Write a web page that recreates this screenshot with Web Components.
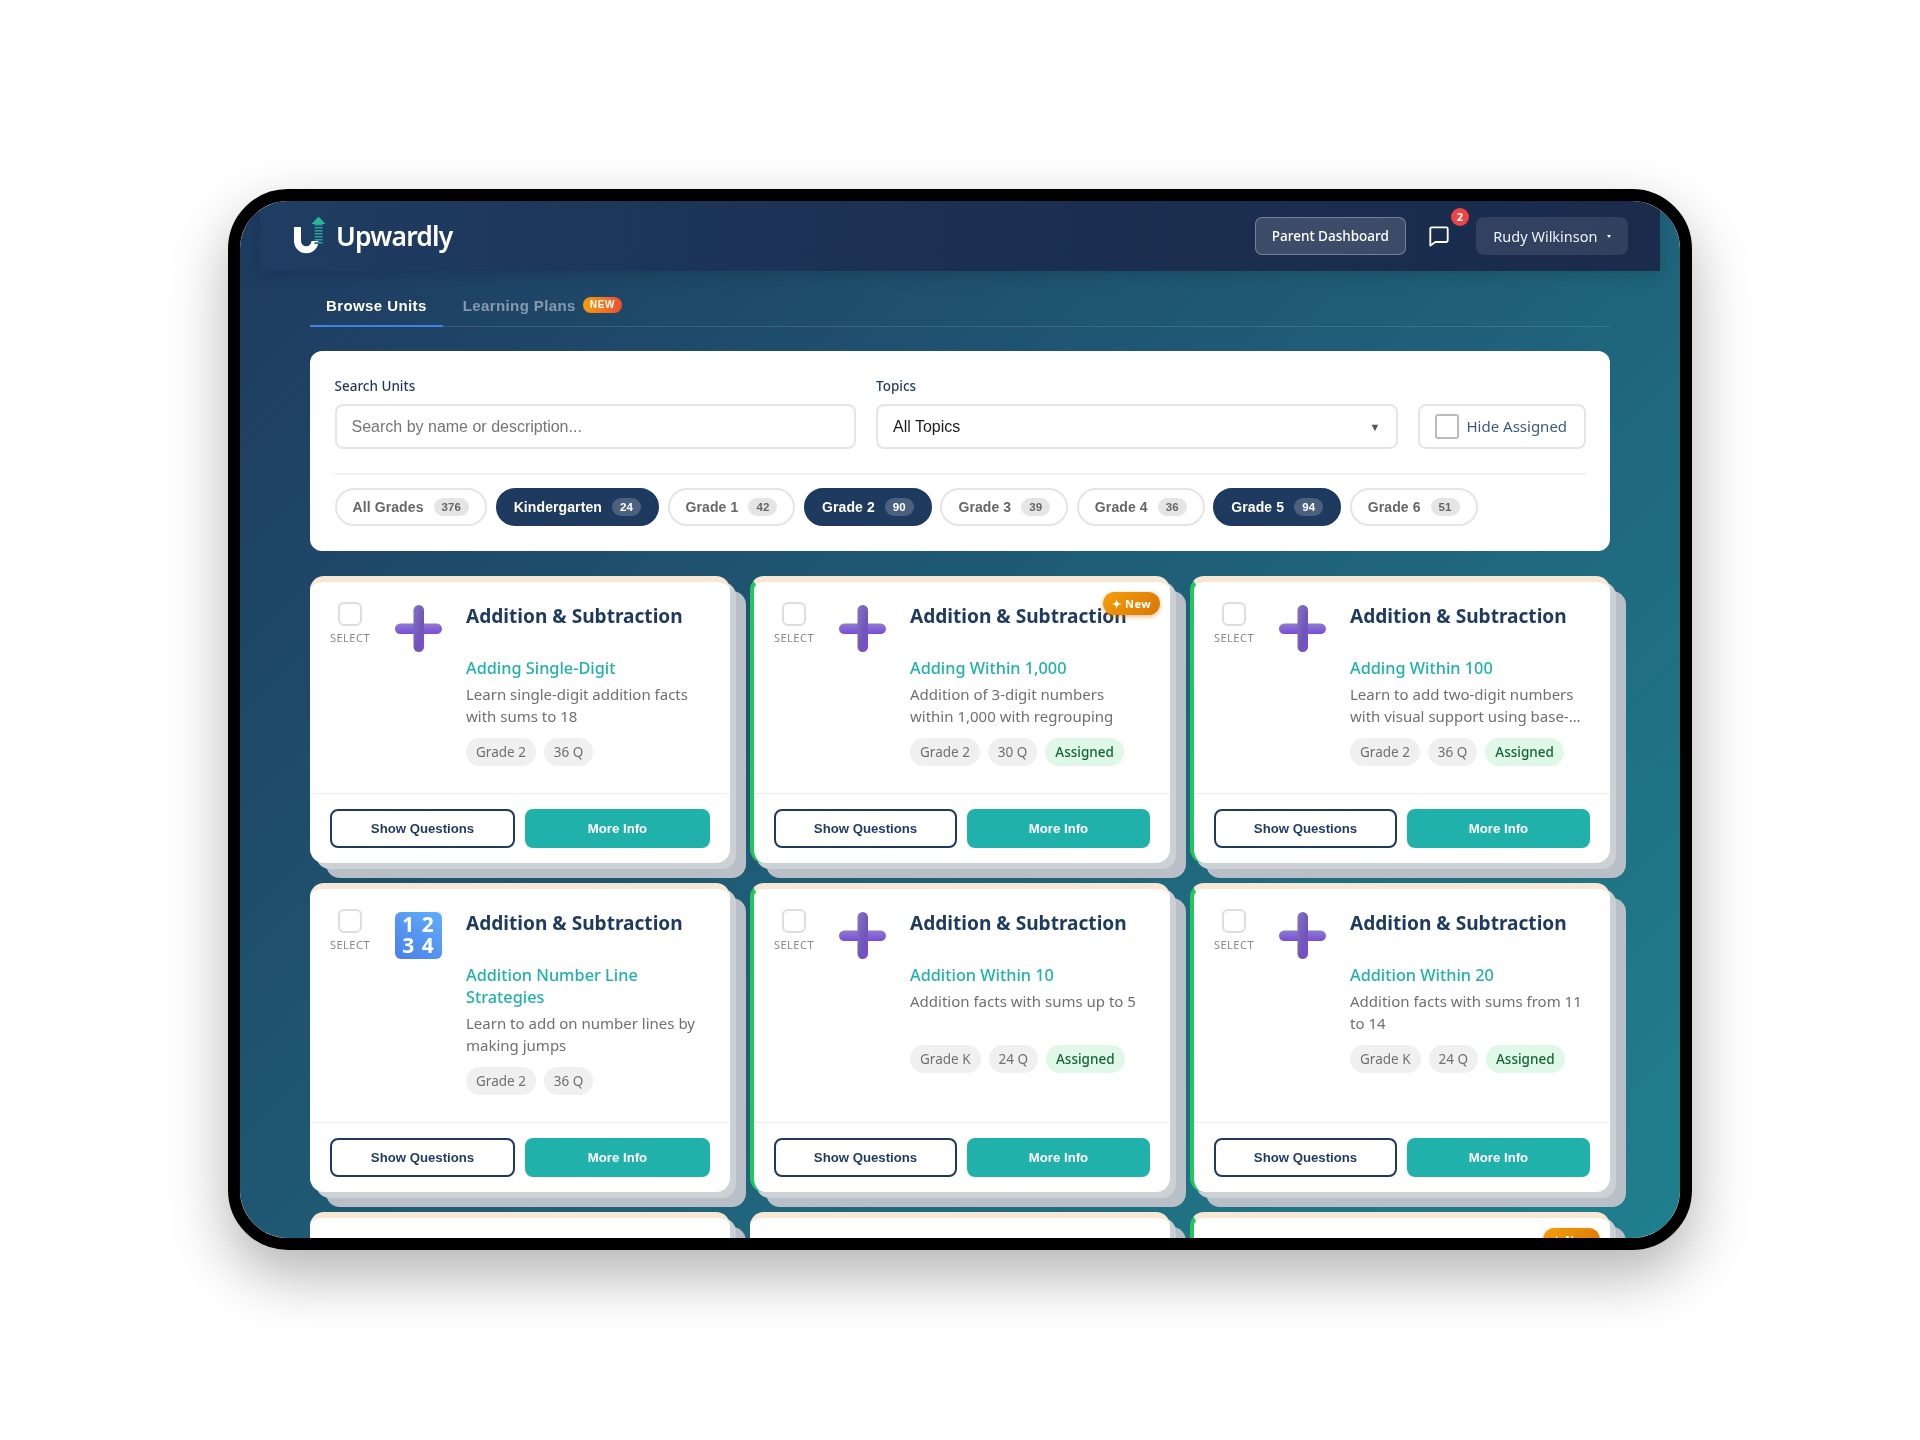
<!DOCTYPE html>
<html lang="en">
<head>
<meta charset="utf-8">
<title>Upwardly</title>
<style>
  html, body { margin: 0; padding: 0; background: #fff; }
  body { box-sizing: border-box; min-height: 1440px; padding-bottom: 2px; display: flex; align-items: center; justify-content: center; font-family: "Noto Sans", sans-serif; }
</style>
</head>
<body>
<app-device>
  <app-navbar></app-navbar>
  <app-tabs></app-tabs>
  <filter-panel>
    <grade-pill count="376">All Grades</grade-pill>
    <grade-pill count="24" active>Kindergarten</grade-pill>
    <grade-pill count="42">Grade 1</grade-pill>
    <grade-pill count="90" active>Grade 2</grade-pill>
    <grade-pill count="39">Grade 3</grade-pill>
    <grade-pill count="36">Grade 4</grade-pill>
    <grade-pill count="94" active>Grade 5</grade-pill>
    <grade-pill count="51">Grade 6</grade-pill>
  </filter-panel>
  <unit-grid>
    <unit-card grade="Grade 2" questions="36 Q">
      <span slot="name">Adding Single-Digit</span>
      Learn single-digit addition facts with sums to 18
    </unit-card>
    <unit-card grade="Grade 2" questions="30 Q" assigned fresh>
      <span slot="name">Adding Within 1,000</span>
      Addition of 3-digit numbers within 1,000 with regrouping
    </unit-card>
    <unit-card grade="Grade 2" questions="36 Q" assigned clamp>
      <span slot="name">Adding Within 100</span>
      Learn to add two-digit numbers with visual support using base-ten blocks
    </unit-card>
    <unit-card grade="Grade 2" questions="36 Q" icon="numbers">
      <span slot="name">Addition Number Line Strategies</span>
      Learn to add on number lines by making jumps
    </unit-card>
    <unit-card grade="Grade K" questions="24 Q" assigned>
      <span slot="name">Addition Within 10</span>
      Addition facts with sums up to 5
    </unit-card>
    <unit-card grade="Grade K" questions="24 Q" assigned>
      <span slot="name">Addition Within 20</span>
      Addition facts with sums from 11 to 14
    </unit-card>
    <unit-stub></unit-stub>
    <unit-stub></unit-stub>
    <unit-stub assigned fresh></unit-stub>
  </unit-grid>
</app-device>

<script>
const templateDevice = document.createElement('template');
templateDevice.innerHTML = `
  <style>
    :host {
      display: block;
      width: 1440px;
      height: 1037px;
      border: 12px solid #000;
      border-radius: 60px;
      box-shadow: 0 25px 60px rgba(0,0,0,.3);
      overflow: hidden;
      flex: none;
    }
    .screen {
      height: 100%;
      display: flex;
      flex-direction: column;
      background: linear-gradient(135deg, #1e3a5f 0%, #20808d 100%);
      overflow: hidden;
      filter: blur(.3px);
    }
  </style>
  <div class="screen"><slot></slot></div>
`;
class AppDevice extends HTMLElement {
  constructor() {
    super();
    this.attachShadow({mode: 'open'});
    this.shadowRoot.appendChild(templateDevice.content.cloneNode(true));
  }
}
customElements.define('app-device', AppDevice);

const templateNavbar = document.createElement('template');
templateNavbar.innerHTML = `
  <style>
    :host {
      display: flex;
      flex: none;
      align-items: center;
      height: 70px;
      margin: 0 20px;
      padding: 0 32px 0 30px;
      box-sizing: border-box;
      background: linear-gradient(90deg, #1f3d62 0%, #1b2f52 50%, #1a2b4c 100%);
      box-shadow: 0 4px 16px rgba(0,0,0,.14);
      color: #fff;
      font-family: "Noto Sans", sans-serif;
    }
    .brand { display: flex; align-items: center; gap: 10px; flex: 1; }
    .brand svg { margin-top: -2px; }
    .brand span { font-size: 26.5px; font-weight: 600; letter-spacing: -.8px; line-height: 1; margin-top: 2px; }
    .dash {
      height: 38px;
      box-sizing: border-box;
      display: flex;
      align-items: center;
      padding: 0 16px;
      background: rgba(255,255,255,.15);
      border: 1px solid rgba(255,255,255,.3);
      border-radius: 7px;
      font-size: 13.5px;
      font-weight: 500;
    }
    .chat { position: relative; width: 22px; height: 22px; margin: 0 26px 0 22px; }
    .chat svg { display: block; }
    .badge {
      position: absolute;
      left: 23px;
      top: -17px;
      width: 18px;
      height: 18px;
      border-radius: 50%;
      background: #ef4444;
      font-size: 11px;
      font-weight: 700;
      line-height: 18px;
      text-align: center;
    }
    .user {
      height: 38px;
      display: flex;
      align-items: center;
      gap: 9px;
      padding: 0 17.5px;
      background: rgba(255,255,255,.1);
      border-radius: 8px;
      font-size: 14.5px;
      color: #eef1f5;
    }
    .user i { width: 0; height: 0; border: 2.5px solid transparent; border-top: 3px solid #fff; margin-top: 3px; }
  </style>
  <div class="brand">
    <svg width="36" height="38" viewBox="0 0 36 38" fill="none">
      <defs>
        <linearGradient id="stem" x1="0" y1="0" x2="0" y2="1">
          <stop offset="0" stop-color="#2fb5a0"/>
          <stop offset="1" stop-color="#1f5f78"/>
        </linearGradient>
      </defs>
      <path d="M7.5 11v14a8.5 8.5 0 0 0 17.5 0" stroke="#fff" stroke-width="7" stroke-linecap="butt"/>
      <path d="M21.5 8 L28.5 0.5 L35.5 8 Z" fill="#2bb39f"/>
      <g fill="url(#stem)">
        <rect x="24.5" y="8" width="8" height="2"/>
        <rect x="24.5" y="11" width="8" height="2"/>
        <rect x="24.5" y="14" width="8" height="2"/>
        <rect x="24.5" y="17" width="8" height="2"/>
        <rect x="24.5" y="20" width="8" height="2"/>
        <rect x="24.5" y="23" width="8" height="2"/>
        <rect x="24.5" y="26" width="8" height="2"/>
      </g>
    </svg>
    <span>Upwardly</span>
  </div>
  <div class="dash">Parent Dashboard</div>
  <div class="chat">
    <svg width="22" height="22" viewBox="0 0 24 24" fill="none" stroke="#fff" stroke-width="2" stroke-linejoin="round">
      <path d="M4 2.5h16a1.5 1.5 0 0 1 1.5 1.5v13a1.5 1.5 0 0 1-1.5 1.5H8L2.5 22.5V4A1.5 1.5 0 0 1 4 2.5z"/>
    </svg>
    <div class="badge">2</div>
  </div>
  <div class="user">Rudy Wilkinson <i></i></div>
`;
class AppNavbar extends HTMLElement {
  constructor() {
    super();
    this.attachShadow({mode: 'open'});
    this.shadowRoot.appendChild(templateNavbar.content.cloneNode(true));
  }
}
customElements.define('app-navbar', AppNavbar);

const templateTabs = document.createElement('template');
templateTabs.innerHTML = `
  <style>
    :host {
      display: flex;
      flex: none;
      align-items: flex-end;
      gap: 4px;
      height: 56px;
      margin: 0 70px 24px;
      box-sizing: border-box;
      border-bottom: 1px solid rgba(255,255,255,.12);
      font-family: "Liberation Sans", Arial, sans-serif;
      font-size: 15px;
      font-weight: 700;
      letter-spacing: .4px;
    }
    .tab {
      display: flex;
      align-items: center;
      gap: 7px;
      height: 42px;
      padding: 1px 16px 0;
      margin-bottom: -1px;
      box-sizing: border-box;
      color: rgba(255,255,255,.45);
      border-bottom: 2px solid transparent;
    }
    .active { color: #fff; border-bottom-color: #3f83e8; }
    .new {
      padding: 0 7px;
      height: 16px;
      line-height: 16px;
      border-radius: 8px;
      background: linear-gradient(90deg, #f59e0b, #ef4f2f);
      color: #fff;
      font-size: 10px;
      letter-spacing: .7px;
    }
  </style>
  <div class="tab active">Browse Units</div>
  <div class="tab">Learning Plans <span class="new">NEW</span></div>
`;
class AppTabs extends HTMLElement {
  constructor() {
    super();
    this.attachShadow({mode: 'open'});
    this.shadowRoot.appendChild(templateTabs.content.cloneNode(true));
  }
}
customElements.define('app-tabs', AppTabs);

const templatePanel = document.createElement('template');
templatePanel.innerHTML = `
  <style>
    :host {
      display: block;
      flex: none;
      margin: 0 70px 25px;
      padding: 25px 24.5px 24px;
      height: 200px;
      box-sizing: border-box;
      background: #fff;
      border-radius: 12px;
      font-family: "Noto Sans", sans-serif;
    }
    .row {
      display: grid;
      grid-template-columns: 521.5px 521.5px 168px;
      gap: 20px;
      align-items: end;
      padding-bottom: 24px;
      border-bottom: 2px solid #f0f0f0;
    }
    label { display: block; font-size: 13.5px; font-weight: 500; color: #1e3a5f; line-height: 20px; margin-bottom: 8px; }
    .box {
      height: 45px;
      box-sizing: border-box;
      display: flex;
      align-items: center;
      padding: 1px 15px 0;
      border: 2px solid #e5e5e5;
      border-radius: 8px;
      font-family: "Liberation Sans", Arial, sans-serif;
      font-size: 16px;
      color: #1c1c1c;
    }
    .hint { color: #757575; }
    .arrow { margin-left: auto; font-size: 11px; color: #555; }
    .hide {
      padding: 0 15px;
      gap: 8px;
      font-family: "Noto Sans", sans-serif;
      font-size: 15px;
      color: #3a5a85;
      white-space: nowrap;
    }
    .hide i { width: 24px; height: 25px; box-sizing: border-box; border: 2px solid #bbb; border-radius: 3px; flex: none; }
    .pills { display: flex; gap: 8.6px; margin-top: 13px; }
  </style>
  <div class="row">
    <div>
      <label>Search Units</label>
      <div class="box hint">Search by name or description...</div>
    </div>
    <div>
      <label>Topics</label>
      <div class="box">All Topics<span class="arrow">▼</span></div>
    </div>
    <div class="box hide"><i></i>Hide Assigned</div>
  </div>
  <div class="pills"><slot></slot></div>
`;
class FilterPanel extends HTMLElement {
  constructor() {
    super();
    this.attachShadow({mode: 'open'});
    this.shadowRoot.appendChild(templatePanel.content.cloneNode(true));
  }
}
customElements.define('filter-panel', FilterPanel);

const templatePill = document.createElement('template');
templatePill.innerHTML = `
  <style>
    :host {
      display: inline-flex;
      align-items: center;
      gap: 10px;
      height: 38px;
      padding: 0 16px;
      box-sizing: border-box;
      border: 2px solid #e5e5e5;
      border-radius: 19px;
      background: #fff;
      color: #666;
      font-family: "Liberation Sans", Arial, sans-serif;
      font-size: 14px;
      font-weight: 700;
      letter-spacing: .1px;
    }
    :host([active]) { background: #1e3a5f; border-color: #1e3a5f; color: #fff; }
    .count {
      height: 18px;
      line-height: 18px;
      padding: 0 8px;
      border-radius: 9px;
      background: #e5e5e5;
      font-size: 11.5px;
    }
    :host([active]) .count { background: rgba(255,255,255,.2); }
  </style>
  <slot></slot><span class="count"></span>
`;
class GradePill extends HTMLElement {
  constructor() {
    super();
    this.attachShadow({mode: 'open'});
    this.shadowRoot.appendChild(templatePill.content.cloneNode(true));
    this.shadowRoot.querySelector('.count').textContent = this.getAttribute('count');
  }
}
customElements.define('grade-pill', GradePill);

const templateGrid = document.createElement('template');
templateGrid.innerHTML = `
  <style>
    :host {
      display: grid;
      grid-template-columns: repeat(3, 420px);
      column-gap: 20px;
      row-gap: 20px;
      margin: 0 70px;
    }
  </style>
  <slot></slot>
`;
class UnitGrid extends HTMLElement {
  constructor() {
    super();
    this.attachShadow({mode: 'open'});
    this.shadowRoot.appendChild(templateGrid.content.cloneNode(true));
  }
}
customElements.define('unit-grid', UnitGrid);

const cardShell = `
    :host {
      display: flex;
      flex-direction: column;
      position: relative;
      box-sizing: border-box;
      background: #fff;
      border-top: 6px solid #f7e8d6;
      border-radius: 14px;
      box-shadow: 6px 6px 0 #ccd1d6, 16px 15px 0 #b9bfc6;
      font-family: "Noto Sans", sans-serif;
    }
    :host([assigned]) { border-left: 4px solid #22c55e; }
    .fresh {
      display: none;
      position: absolute;
      z-index: 2;
      top: 10px;
      right: 10px;
      height: 23px;
      line-height: 23px;
      padding: 0 9px;
      border-radius: 12px;
      background: linear-gradient(135deg, #f59e0b, #d97706);
      box-shadow: 0 2px 5px rgba(217,119,6,.45);
      color: #fff;
      font-size: 11px;
      font-weight: 700;
      letter-spacing: .4px;
      white-space: nowrap;
    }
    :host([fresh]) .fresh { display: block; }
    .check { width: 24px; height: 24px; box-sizing: border-box; border: 2px solid #ddd; border-radius: 6px; }
`;

const templateCard = document.createElement('template');
templateCard.innerHTML = `
  <style>
    ${cardShell}
    .body {
      display: grid;
      grid-template-columns: 40px 47px 1fr;
      column-gap: 24.5px;
      padding: 20px 20px 27px;
    }
    .pick { display: flex; flex-direction: column; align-items: center; gap: 5px; }
    .pick span { font-size: 11px; letter-spacing: .5px; color: #888; line-height: 14px; }
    .icon { width: 47px; height: 47px; margin-top: 3px; }
    .icon svg { display: block; }
    .numbers {
      box-sizing: border-box;
      display: grid;
      grid-template-columns: 1fr 1fr;
      padding: 2px 4px;
      border-radius: 6px;
      background: linear-gradient(215deg, #60aefa, #4b7fe8);
      color: #fff;
      font-size: 21px;
      font-weight: 700;
      line-height: 21px;
      text-align: center;
    }
    h3 { margin: 0; font-size: 19.1px; font-weight: 700; color: #1e3a5f; line-height: 28px; min-height: 55px; }
    .name { font-size: 16.3px; font-weight: 500; color: #20b2aa; line-height: 22px; }
    .desc { font-size: 15px; color: #707070; line-height: 22.5px; min-height: 45px; margin-top: 4px; }
    :host([clamp]) .desc { display: -webkit-box; -webkit-line-clamp: 2; -webkit-box-orient: vertical; overflow: hidden; }
    .tags { display: flex; gap: 8px; margin-top: 10px; }
    .tags span {
      height: 28px;
      line-height: 28px;
      padding: 0 10px;
      border-radius: 14px;
      background: #f0f0f0;
      color: #707070;
      font-size: 13.5px;
    }
    .tags .done { background: #e0f8e8; color: #166534; font-weight: 500; }
    .foot {
      display: flex;
      gap: 10px;
      margin-top: auto;
      padding: 15px 20px;
      border-top: 1px solid #eee;
    }
    .foot button {
      flex: 1;
      height: 39px;
      border: 2px solid #1e3a5f;
      border-radius: 8px;
      background: #fff;
      color: #1e3a5f;
      font-family: "Liberation Sans", Arial, sans-serif;
      font-size: 13.2px;
      font-weight: 700;
    }
    .foot .more { background: #20b2aa; border-color: #20b2aa; color: #fff; }
  </style>
  <div class="fresh">✦ New</div>
  <div class="body">
    <div class="pick"><div class="check"></div><span>SELECT</span></div>
    <div class="icon"></div>
    <div>
      <h3>Addition &amp; Subtraction</h3>
      <div class="name"><slot name="name"></slot></div>
      <div class="desc"><slot></slot></div>
      <div class="tags"></div>
    </div>
  </div>
  <div class="foot">
    <button>Show Questions</button>
    <button class="more">More Info</button>
  </div>
`;
const plusIcon = `
  <svg width="47" height="47" viewBox="0 0 47 47">
    <defs>
      <linearGradient id="bar" x1="0" y1="0" x2="0" y2="1">
        <stop offset="0" stop-color="#8d7cca"/>
        <stop offset="1" stop-color="#7c4bdc"/>
      </linearGradient>
      <linearGradient id="post" x1="0" y1="0" x2="1" y2="1">
        <stop offset="0" stop-color="#8474c6"/>
        <stop offset=".6" stop-color="#6f56b6"/>
        <stop offset="1" stop-color="#8148de"/>
      </linearGradient>
    </defs>
    <rect x="0" y="18.5" width="47" height="10.5" rx="5.25" fill="url(#bar)"/>
    <rect x="18.5" y="0" width="10.5" height="47" rx="5.25" fill="url(#post)"/>
  </svg>`;

class UnitCard extends HTMLElement {
  constructor() {
    super();
    this.attachShadow({mode: 'open'});
    this.shadowRoot.appendChild(templateCard.content.cloneNode(true));
    const icon = this.shadowRoot.querySelector('.icon');
    if (this.getAttribute('icon') === 'numbers') {
      icon.classList.add('numbers');
      icon.innerHTML = '<span>1</span><span>2</span><span>3</span><span>4</span>';
    } else {
      icon.innerHTML = plusIcon;
    }
    const tags = this.shadowRoot.querySelector('.tags');
    tags.innerHTML = `<span>${this.getAttribute('grade')}</span><span>${this.getAttribute('questions')}</span>`
      + (this.hasAttribute('assigned') ? '<span class="done">Assigned</span>' : '');
  }
}
customElements.define('unit-card', UnitCard);

// third row is cut off by the frame, only its top edge shows
const templateStub = document.createElement('template');
templateStub.innerHTML = `
  <style>
    ${cardShell}
    :host { height: 287px; padding: 20px; }
    .check { margin-left: 8px; }
  </style>
  <div class="fresh">✦ New</div>
  <div class="check"></div>
`;
class UnitStub extends HTMLElement {
  constructor() {
    super();
    this.attachShadow({mode: 'open'});
    this.shadowRoot.appendChild(templateStub.content.cloneNode(true));
  }
}
customElements.define('unit-stub', UnitStub);
</script>
</body>
</html>
